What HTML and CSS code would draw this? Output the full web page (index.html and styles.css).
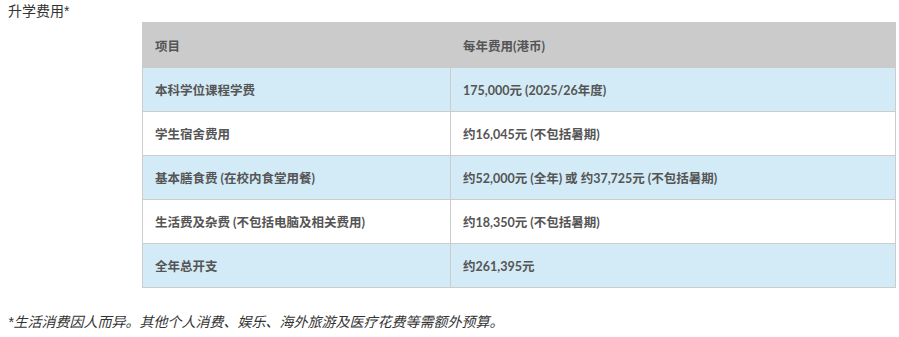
FILE: index.html
```html
<!DOCTYPE html>
<html lang="zh-CN">
<head>
<meta charset="utf-8">
<link rel="stylesheet" href="styles.css">
</head>
<body>
<div class="page">
  <p class="title">升学费用*</p>
  <table class="fees">
    <thead>
      <tr><th>项目</th><th>每年费用(港币)</th></tr>
    </thead>
    <tbody>
      <tr class="blue"><td>本科学位课程学费</td><td>175,000元 (2025/26年度)</td></tr>
      <tr><td>学生宿舍费用</td><td>约16,045元 (不包括暑期)</td></tr>
      <tr class="blue"><td>基本膳食费 (在校内食堂用餐)</td><td>约52,000元 (全年) 或 约37,725元 (不包括暑期)</td></tr>
      <tr><td>生活费及杂费 (不包括电脑及相关费用)</td><td>约18,350元 (不包括暑期)</td></tr>
      <tr class="blue"><td>全年总开支</td><td>约261,395元</td></tr>
    </tbody>
  </table>
  <p class="note">*生活消费因人而异。其他个人消费、娱乐、海外旅游及医疗花费等需额外预算。</p>
</div>
</body>
</html>
```

FILE: styles.css
```css
html, body {
  margin: 0;
  padding: 0;
  background: #fff;
}
.page {
  padding: 0 8px;
  font-family: "Liberation Sans", "Noto Sans CJK SC", sans-serif;
  color: #333;
}
.title {
  margin: 0;
  padding-top: 2px;
  font-size: 14px;
  line-height: 18px;
}
.fees {
  margin: 2px 0 0 134px;
  width: 754px;
  border-collapse: collapse;
  font-family: Lato, "Noto Sans CJK SC", sans-serif;
  font-size: 12.5px;
  color: #555;
}
.fees th, .fees td {
  text-align: left;
  padding: 0 12px;
  height: 43px;
  border: 1px solid #cccccc;
  font-weight: 700;
}
.fees th {
  background: #cbcbcb;
  height: 44px;
  border-color: #cbcbcb;
}
.fees th:first-child, .fees td:first-child {
  width: 283px;
}
.fees tr.blue td {
  background: #d3ebf7;
}
.note {
  margin: 25px 0 0;
  font-family: "Liberation Sans", "Noto Sans CJK TC", sans-serif;
  font-size: 14px;
  font-style: italic;
  line-height: 18px;
}
```
